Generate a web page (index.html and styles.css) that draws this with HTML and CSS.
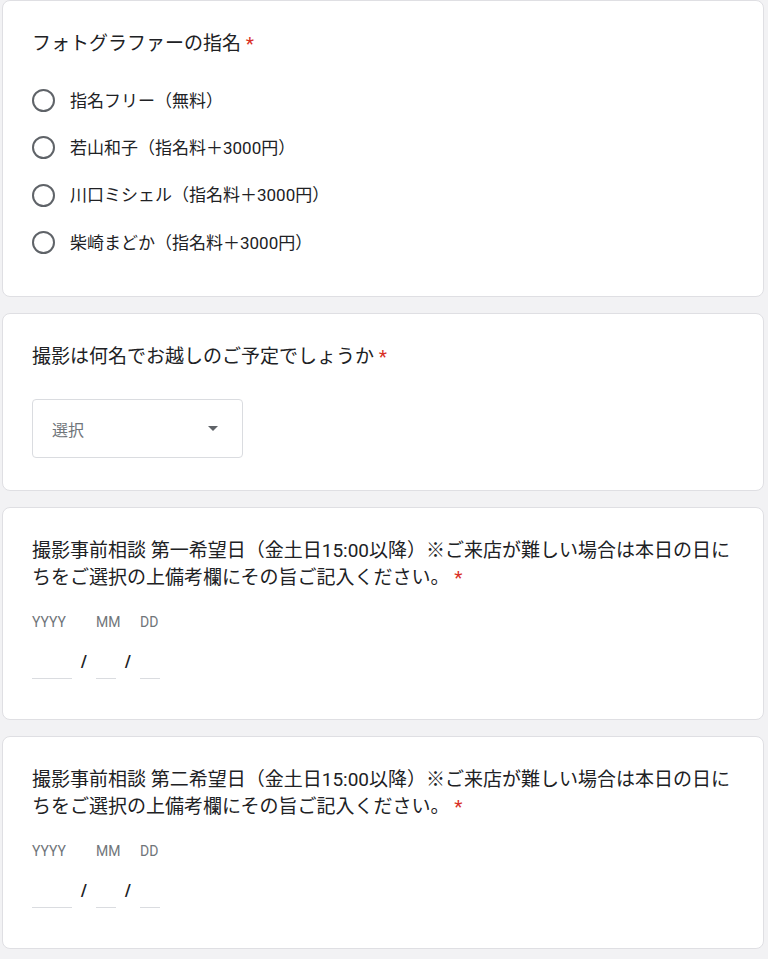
FILE: index.html
```html
<!DOCTYPE html>
<html lang="ja">
<head>
<meta charset="utf-8">
<title>フォーム</title>
<link rel="stylesheet" href="styles.css">
</head>
<body>
<main class="form">
  <section class="card">
    <h2 class="q-title">フォトグラファーの指名 <span class="req">*</span></h2>
    <ul class="options">
      <li class="option"><span class="radio"></span><span class="opt-label">指名フリー（無料）</span></li>
      <li class="option"><span class="radio"></span><span class="opt-label">若山和子（指名料＋3000円）</span></li>
      <li class="option"><span class="radio"></span><span class="opt-label">川口ミシェル（指名料＋3000円）</span></li>
      <li class="option"><span class="radio"></span><span class="opt-label">柴崎まどか（指名料＋3000円）</span></li>
    </ul>
  </section>

  <section class="card card-select">
    <h2 class="q-title">撮影は何名でお越しのご予定でしょうか <span class="req">*</span></h2>
    <div class="select">
      <span class="select-text">選択</span>
      <span class="select-arrow"></span>
    </div>
  </section>

  <section class="card card-date">
    <h2 class="q-title">撮影事前相談 第一希望日（金土日15:00以降）※ご来店が難しい場合は本日の日にちをご選択の上備考欄にその旨ご記入ください。 <span class="req">*</span></h2>
    <div class="date">
      <div class="date-col date-yyyy"><span class="date-label">YYYY</span><span class="date-input"></span></div>
      <div class="date-sep">/</div>
      <div class="date-col date-mm"><span class="date-label">MM</span><span class="date-input"></span></div>
      <div class="date-sep">/</div>
      <div class="date-col date-dd"><span class="date-label">DD</span><span class="date-input"></span></div>
    </div>
  </section>

  <section class="card card-date">
    <h2 class="q-title">撮影事前相談 第二希望日（金土日15:00以降）※ご来店が難しい場合は本日の日にちをご選択の上備考欄にその旨ご記入ください。 <span class="req">*</span></h2>
    <div class="date">
      <div class="date-col date-yyyy"><span class="date-label">YYYY</span><span class="date-input"></span></div>
      <div class="date-sep">/</div>
      <div class="date-col date-mm"><span class="date-label">MM</span><span class="date-input"></span></div>
      <div class="date-sep">/</div>
      <div class="date-col date-dd"><span class="date-label">DD</span><span class="date-input"></span></div>
    </div>
  </section>
</main>
</body>
</html>
```

FILE: styles.css
```css
* { box-sizing: border-box; }
html, body {
  margin: 0;
  padding: 0;
  background: #f2f2f4;
}
body {
  font-family: "Roboto", "Noto Sans CJK JP", sans-serif;
  color: #202124;
}
.form {
  display: flex;
  flex-direction: column;
  gap: 16px;
  padding: 0 4px 0 2px;
}
.card {
  background: #fff;
  border: 1px solid #dfdfe3;
  border-radius: 8px;
  padding: 29px 29px 30px 29px;
}
.q-title {
  margin: 0;
  font-size: 19px;
  line-height: 27px;
  font-weight: 400;
  color: #202124;
}
.req {
  color: #d93025;
}
.options {
  list-style: none;
  margin: 20px 0 0 0;
  padding: 0;
}
.option {
  display: flex;
  align-items: center;
  height: 47.3px;
}
.radio {
  width: 23px;
  height: 23px;
  border: 2px solid #5f6368;
  border-radius: 50%;
  flex: none;
}
.opt-label {
  margin-left: 15px;
  font-size: 17px;
  line-height: 24px;
}
.card-select {
  padding-bottom: 32px;
}
.select {
  margin-top: 29px;
  width: 211px;
  height: 59px;
  border: 1px solid #dadce0;
  border-radius: 4px;
  display: flex;
  align-items: center;
  justify-content: space-between;
  padding: 0 24px 0 19px;
}
.select-text {
  font-size: 16px;
  color: #70757a;
}
.select-arrow {
  width: 0;
  height: 0;
  border-left: 5px solid transparent;
  border-right: 5px solid transparent;
  border-top: 5px solid #5f6368;
}
.card-date {
  padding-bottom: 40px;
}
.date {
  display: flex;
  margin-top: 23px;
}
.date-col {
  display: flex;
  flex-direction: column;
}
.date-yyyy { width: 40px; }
.date-mm, .date-dd { width: 20px; }
.date-label {
  font-size: 14px;
  line-height: 16px;
  color: #70757a;
  white-space: nowrap;
}
.date-input {
  margin-top: 18px;
  height: 31px;
  border-bottom: 1px solid #dadce0;
}
.date-sep {
  width: 24px;
  align-self: flex-end;
  height: 32px;
  line-height: 30px;
  text-align: center;
  font-size: 16px;
  font-weight: 700;
  color: #202124;
}
```
